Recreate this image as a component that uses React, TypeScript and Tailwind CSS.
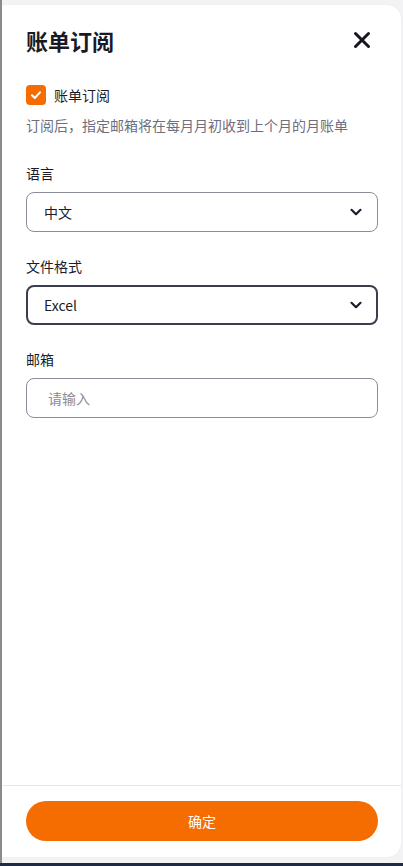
import React from "react";

const font = "font-['Noto_Sans_CJK_SC','Noto_Sans',sans-serif]";

const Chevron = () => (
  <svg width="14" height="14" viewBox="0 0 14 14" fill="none">
    <path
      d="M2.5 4.8 7 9.2l4.5-4.4"
      stroke="#1c1c28"
      strokeWidth="2.2"
      strokeLinecap="round"
      strokeLinejoin="round"
    />
  </svg>
);

type SelectProps = { value: string; active?: boolean };

const SelectBox: React.FC<SelectProps> = ({ value, active = false }) => (
  <div
    className={
      active
        ? "flex h-10 items-center justify-between rounded-lg border-2 border-[#3d3d4e] pl-[16px] pr-[13px]"
        : "flex h-10 items-center justify-between rounded-lg border border-[#8c8c9a] pl-[17px] pr-[14px]"
    }
  >
    <span className="text-[14px] text-[#1c1c28]">{value}</span>
    <Chevron />
  </div>
);

const Field: React.FC<{ label: string; top: string; children: React.ReactNode }> = ({
  label,
  top,
  children,
}) => (
  <div className={`flex flex-col gap-[9px] ${top}`}>
    <div className="text-[14px] leading-5 text-[#1c1c28]">{label}</div>
    {children}
  </div>
);

export default function App() {
  return (
    <div className={`flex h-[866px] w-[403px] flex-col bg-[#f3f3f5] ${font}`}>
      <div className="flex flex-1">
        <div className="w-[2px] bg-[#8b8b8b]" />
        <div className="flex flex-1 flex-col pt-[5px] pb-[6px] pr-[2px]">
          <div className="flex flex-1 flex-col rounded-r-[14px] bg-white shadow-[0_0_2px_rgba(0,0,0,0.06)]">
            <div className="flex flex-1 flex-col pl-[24px] pr-[23px] pt-[21px]">
              <div className="flex h-[28px] items-center justify-between">
                <h1 className="text-[22px] font-bold text-[#1a1a26]">账单订阅</h1>
                <svg width="18" height="18" viewBox="0 0 18 18" className="mr-[7px]">
                  <path
                    d="M2.5 2.5l13 13M15.5 2.5l-13 13"
                    stroke="#16161f"
                    strokeWidth="3"
                    strokeLinecap="round"
                  />
                </svg>
              </div>

              <div className="mt-[31px] flex h-5 items-center gap-2">
                <div className="flex h-5 w-5 items-center justify-center rounded-[4px] bg-[#f56c00]">
                  <svg width="12" height="12" viewBox="0 0 12 12" fill="none">
                    <path
                      d="M2 6.2 4.8 9 10 3.3"
                      stroke="white"
                      strokeWidth="2"
                      strokeLinecap="round"
                      strokeLinejoin="round"
                    />
                  </svg>
                </div>
                <span className="text-[14px] text-[#1c1c28]">账单订阅</span>
              </div>

              <p className="mt-[10px] text-[14px] leading-5 text-[#6e6e7e]">
                订阅后，指定邮箱将在每月月初收到上个月的月账单
              </p>

              <Field label="语言" top="mt-[28px]">
                <SelectBox value="中文" />
              </Field>

              <Field label="文件格式" top="mt-[24px]">
                <SelectBox value="Excel" active />
              </Field>

              <Field label="邮箱" top="mt-[24px]">
                <div className="flex h-10 items-center rounded-lg border border-[#8c8c9a] pl-[21px]">
                  <span className="text-[14px] text-[#8a8a98]">请输入</span>
                </div>
              </Field>
            </div>

            <div className="border-t border-[#e8e8ec] pl-[24px] pr-[23px] pt-[15px] pb-[16px]">
              <button className="flex h-10 w-full items-center justify-center rounded-full bg-[#f56c00] text-[14px] text-white">
                确定
              </button>
            </div>
          </div>
        </div>
      </div>
      <div className="h-[3px] bg-[#1f2a44]" />
    </div>
  );
}
